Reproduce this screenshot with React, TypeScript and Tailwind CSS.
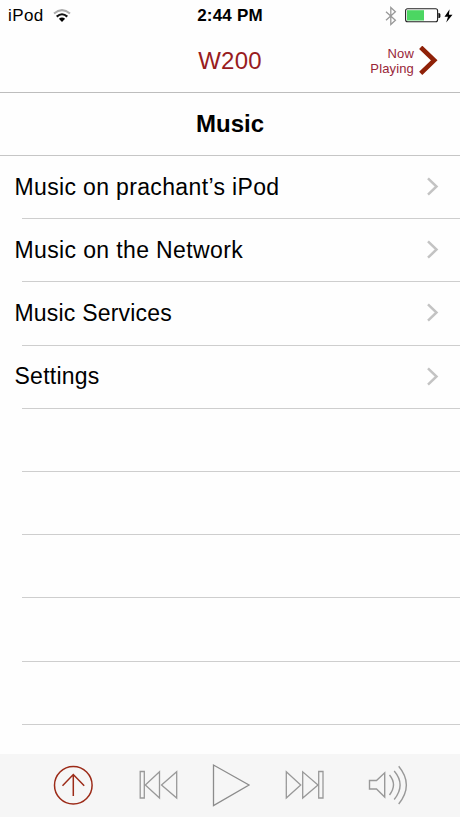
import React from 'react';

const items = ['Music on prachant’s iPod', 'Music on the Network', 'Music Services', 'Settings'];
const spacing = ['tracking-[0.35px]', 'tracking-[0.37px]', 'tracking-[0.2px]', 'tracking-[0.25px]'];

function StatusBar() {
  return (
    <div className="grid h-[30px] grid-cols-3 items-center">
      <div className="flex items-center pl-[8px]">
        <span className="pt-px text-[17px] leading-[30px] tracking-[0.4px]">iPod</span>
        <svg className="ml-[9px]" width="18" height="14" viewBox="0 0 18 14" fill="none">
          <path d="M1 4.5Q9-2.3 17 4.5" stroke="#aaa" strokeWidth="2" />
          <path d="M3.7 7.6Q9 2.9 14.3 7.6" stroke="#111" strokeWidth="2.1" />
          <path d="M5.9 9.7Q9 7.2 12.1 9.7L9 13Z" fill="#000" />
        </svg>
      </div>
      <span className="pt-px text-center text-[17px] font-bold leading-[30px] tracking-[0.2px]">2:44 PM</span>
      <div className="flex items-center justify-end pr-[7px]">
        <svg width="12" height="20" viewBox="0 0 12 20" fill="none" stroke="#999" strokeWidth="1.3">
          <path d="M1 5.7L10.4 14.2L5.8 18.5V1.5L10.4 5.8L1 14.3" />
        </svg>
        <svg className="ml-[8px]" width="36" height="15" viewBox="0 0 36 15">
          <rect x=".6" y=".8" width="32" height="13" rx="2" fill="#fff" stroke="#222" strokeWidth="1.1" />
          <rect x="2" y="2.2" width="17" height="10.3" fill="#4cd662" />
          <path d="M33.4 5h.5a1.5 1.5 0 0 1 1.5 1.5v2a1.5 1.5 0 0 1-1.5 1.5h-.5Z" fill="#111" />
        </svg>
        <svg className="ml-[3px]" width="9" height="14" viewBox="0 0 9 14">
          <path d="M5.6.3L.5 7.7H4L2.2 13.6L8.5 5.8H4.9Z" fill="#000" />
        </svg>
      </div>
    </div>
  );
}

function Toolbar() {
  return (
    <footer className="flex grow items-center bg-[#f6f6f6] pb-[2px] pl-[53px]">
      <svg width="40" height="40" viewBox="0 0 40 40" fill="none" stroke="#9c2b18" strokeWidth="1.5">
        <circle cx="20.3" cy="20.2" r="18.8" />
        <path d="M20.3 31V9.3M9.5 20.8L20.3 9.5L31.2 20.8" />
      </svg>
      <svg className="ml-[46px]" width="40" height="30" viewBox="0 0 40 30" fill="none" stroke="#999" strokeWidth="1.3">
        <path d="M1.2 1.5H5.3V28H1.2ZM20.5 1.8V28L6.3 15ZM37.7 1.8V28L22.5 15Z" />
      </svg>
      <svg className="ml-[33px]" width="40" height="44" viewBox="0 0 40 44" fill="none" stroke="#8c8c8c" strokeWidth="1.3">
        <path d="M1.5 2V42.5L37 22Z" />
      </svg>
      <svg className="ml-[33px]" width="40" height="30" viewBox="0 0 40 30" fill="none" stroke="#999" strokeWidth="1.3">
        <path d="M1.3 1.8V28L15.7 15ZM17.7 1.8V28L33 15ZM33.7 1.5H38V28H33.7Z" />
      </svg>
      <svg className="ml-[43px]" width="42" height="40" viewBox="0 0 42 40" fill="none" stroke="#999" strokeWidth="1.4">
        <path d="M1.5 15.5H8.5L16.7 7.8V32L8.5 24H1.5ZM21.5 10Q29.5 19.7 21.5 30M26.2 6Q38 19.7 26.2 34.5M30.7 1.2Q46 19.7 30.7 39" />
      </svg>
    </footer>
  );
}

export default function App() {
  return (
    <main className="flex h-[817px] w-[460px] flex-col overflow-hidden bg-[#fefefe] font-['Liberation_Sans',Arial,sans-serif] text-black">
      <header className="h-[93px] border-b border-[#bdbdbd]">
        <StatusBar />
        <div className="grid h-[62px] grid-cols-[115px_1fr_115px] items-center">
          <span />
          <h1 className="text-center text-[24px] tracking-[0.2px] text-[#981c1e]">W200</h1>
          <button className="flex items-center justify-end pr-[22px] text-right text-[13px] leading-[15px] tracking-[0.15px] text-[#982638]">
            <span>Now<br />Playing</span>
            <svg className="ml-[5px]" width="19" height="30" viewBox="0 0 19 30" fill="none">
              <path d="M1.7 1.3L15.2 14.3L1.7 27.3" stroke="#8f2108" strokeWidth="4.6" />
            </svg>
          </button>
        </div>
      </header>
      <h2 className="h-[63px] border-b border-[#c6c6c6] text-center text-[24px] font-bold leading-[62px]">Music</h2>
      <ul className="h-[598px] shrink-0 overflow-hidden">
        {Array.from({ length: 9 }, (_, i) => (
          <li key={i} className="ml-[22px] h-[63.2px] border-b border-[#cecece]">
            {i < items.length && (
              <div className="-ml-[7.5px] flex h-[62px] items-center justify-between pr-[21px]">
                <span className={`whitespace-nowrap text-[23px] ${spacing[i]}`}>{items[i]}</span>
                <svg width="13" height="20" viewBox="0 0 13 20" fill="none">
                  <path d="M2 1.3L10.5 9.5L2 17.7" stroke="#c3c3c3" strokeWidth="2.5" />
                </svg>
              </div>
            )}
          </li>
        ))}
      </ul>
      <Toolbar />
    </main>
  );
}
